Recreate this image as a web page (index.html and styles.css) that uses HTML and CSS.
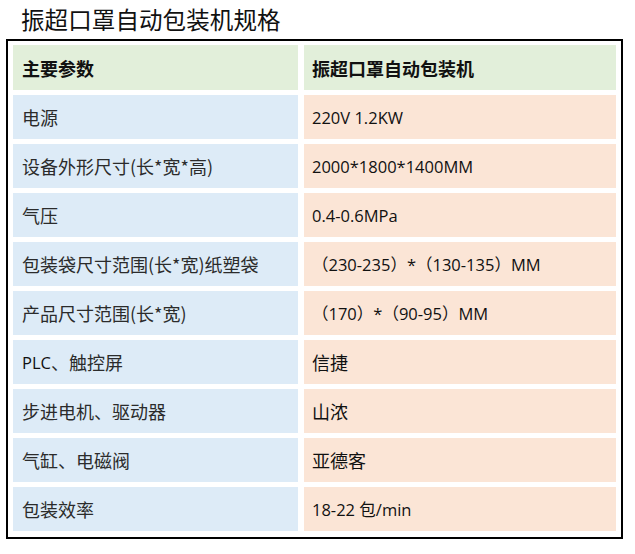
FILE: index.html
```html
<!DOCTYPE html>
<html lang="zh-CN">
<head>
<meta charset="utf-8">
<title>振超口罩自动包装机规格</title>
<link rel="stylesheet" href="styles.css">
</head>
<body>
<h1 class="title">振超口罩自动包装机规格</h1>
<div class="spec">
  <div class="cell head">主要参数</div>
  <div class="cell head">振超口罩自动包装机</div>

  <div class="cell key">电源</div>
  <div class="cell val">220V 1.2KW</div>

  <div class="cell key">设备外形尺寸(长*宽*高)</div>
  <div class="cell val">2000*1800*1400MM</div>

  <div class="cell key">气压</div>
  <div class="cell val">0.4-0.6MPa</div>

  <div class="cell key">包装袋尺寸范围(长*宽)纸塑袋</div>
  <div class="cell val">（230-235）*（130-135）MM</div>

  <div class="cell key">产品尺寸范围(长*宽)</div>
  <div class="cell val">（170）*（90-95）MM</div>

  <div class="cell key"><span class="lat">PLC</span>、触控屏</div>
  <div class="cell val cjk">信捷</div>

  <div class="cell key">步进电机、驱动器</div>
  <div class="cell val cjk">山浓</div>

  <div class="cell key">气缸、电磁阀</div>
  <div class="cell val cjk">亚德客</div>

  <div class="cell key">包装效率</div>
  <div class="cell val">18-22 包/min</div>
</div>
</body>
</html>
```

FILE: styles.css
```css
html, body {
  margin: 0;
  padding: 0;
  background: #ffffff;
}

body {
  width: 635px;
  height: 554px;
  font-family: "Noto Sans CJK SC", sans-serif;
}

.title {
  margin: 0;
  height: 39px;
  padding-left: 21px;
  font-family: "Noto Sans CJK SC", sans-serif;
  font-weight: 400;
  font-size: 23.5px;
  line-height: 38px;
  color: #111111;
  letter-spacing: 0.1px;
}

.spec {
  margin-left: 6px;
  width: 613px;
  border: 2px solid #000000;
  padding: 4px 5px 6px 5px;
  box-sizing: content-box;
  display: grid;
  grid-template-columns: 285px 312px;
  grid-template-rows: 45px;
  grid-auto-rows: 44px;
  column-gap: 6px;
  row-gap: 5px;
  width: 603px;
}

.cell {
  display: flex;
  align-items: center;
  font-size: 18px;
  white-space: nowrap;
}

.head {
  background: #e2efda;
  font-weight: 700;
  color: #111111;
}

.head:first-child {
  padding-left: 9px;
}

.head:nth-child(2) {
  padding-left: 8px;
}

.key {
  background: #ddebf7;
  padding-left: 9px;
  color: #2b2b2b;
}

.val {
  background: #fbe5d6;
  padding-left: 8px;
  color: #111111;
  font-family: "Open Sans", "Noto Sans CJK SC", sans-serif;
  font-size: 16.5px;
}

.val.cjk {
  font-family: "Noto Sans CJK SC", sans-serif;
  font-size: 18px;
}

.lat {
  font-family: "Open Sans", sans-serif;
  font-size: 16.5px;
  color: #111111;
}
```
